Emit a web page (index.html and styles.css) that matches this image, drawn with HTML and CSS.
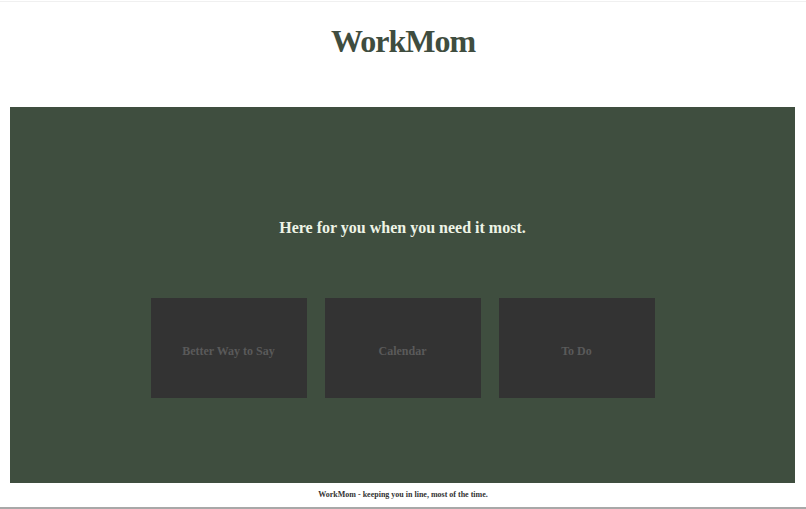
FILE: index.html
```html
<!DOCTYPE html>
<html>
<head>
<meta charset="utf-8">
<title>WorkMom</title>
<link rel="stylesheet" href="styles.css">
</head>
<body>
<header class="site-header">
  <h1 class="brand">WorkMom</h1>
</header>
<main class="hero">
  <h2 class="tagline">Here for you when you need it most.</h2>
  <div class="cards">
    <a class="card" href="#">Better Way to Say</a>
    <a class="card" href="#">Calendar</a>
    <a class="card" href="#">To Do</a>
  </div>
</main>
<footer class="site-footer">
  <p class="footer-text">WorkMom - keeping you in line, most of the time.</p>
</footer>
</body>
</html>
```
FILE: styles.css
```css
html, body {
  margin: 0;
  padding: 0;
  background: #ffffff;
}
body {
  font-family: "Liberation Serif", "Times New Roman", serif;
  border-top: 1px solid #f0f0f0;
  margin-top: 1px;
}
.site-header {
  height: 105px;
  display: flex;
  justify-content: center;
}
.brand {
  margin: 0;
  padding-top: 20px;
  font-size: 32px;
  line-height: 38px;
  letter-spacing: -1px;
  font-weight: bold;
  color: #3f4d3f;
}
.hero {
  margin: 0 11px 0 10px;
  height: 376px;
  background: #3f4e3f;
  display: flex;
  flex-direction: column;
  align-items: center;
  padding-top: 111px;
  box-sizing: border-box;
}
.tagline {
  margin: 0;
  font-size: 16px;
  line-height: 20px;
  font-weight: bold;
  color: #eef4e6;
}
.cards {
  margin-top: 60px;
  display: flex;
  gap: 18px;
}
.card {
  width: 156px;
  height: 100px;
  box-sizing: border-box;
  padding-top: 6px;
  background: #333333;
  color: #5a5a5a;
  font-size: 12px;
  font-weight: bold;
  text-decoration: none;
  display: flex;
  align-items: center;
  justify-content: center;
}
.site-footer {
  padding-top: 7px;
  height: 17px;
  border-bottom: 2px solid #a8a8a8;
}
.footer-text {
  margin: 0;
  text-align: center;
  font-size: 8px;
  line-height: 10px;
  font-weight: bold;
  color: #333333;
}
```
